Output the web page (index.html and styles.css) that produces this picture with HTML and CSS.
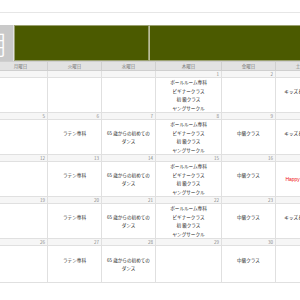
FILE: index.html
```html
<!DOCTYPE html>
<html lang="ja">
<head>
<meta charset="utf-8">
<link rel="stylesheet" href="styles.css">
</head>
<body>
<div class="topbar"></div>
<div class="cal">
  <div class="head">
    <div class="month"><span>11月</span></div>
    <div class="band b1"></div>
    <div class="band b2"></div>
  </div>
  <table class="grid">
    <colgroup><col class="c54"><col class="c54"><col class="c54"><col class="c66"><col class="c54"><col class="c54"></colgroup>
    <tr class="days"><td>月曜日</td><td>火曜日</td><td>水曜日</td><td>木曜日</td><td>金曜日</td><td>土曜日</td></tr>
    <tr class="dates"><td></td><td></td><td></td><td>1</td><td>2</td><td>3</td></tr>
    <tr class="ev"><td></td><td></td><td></td><td>ボールルーム専科<br>ビギナークラス<br>初 級クラス<br>ヤングサークル</td><td></td><td>キッズ＆ジュニア<br>&nbsp;</td></tr>
    <tr class="dates"><td>5</td><td>6</td><td>7</td><td>8</td><td>9</td><td>10</td></tr>
    <tr class="ev"><td></td><td>ラテン専科<br>&nbsp;</td><td>65 歳からの初めての<br>ダンス</td><td>ボールルーム専科<br>ビギナークラス<br>初 級クラス<br>ヤングサークル</td><td>中級クラス<br>&nbsp;</td><td>キッズ＆ジュニア<br>&nbsp;</td></tr>
    <tr class="dates"><td>12</td><td>13</td><td>14</td><td>15</td><td>16</td><td>17</td></tr>
    <tr class="ev"><td></td><td>ラテン専科<br>&nbsp;</td><td>65 歳からの初めての<br>ダンス</td><td>ボールルーム専科<br>ビギナークラス<br>初 級クラス<br>ヤングサークル</td><td>中級クラス<br>&nbsp;</td><td><span class="red">Happy Birthday</span></td></tr>
    <tr class="dates"><td>19</td><td>20</td><td>21</td><td>22</td><td>23</td><td>24</td></tr>
    <tr class="ev"><td></td><td>ラテン専科<br>&nbsp;</td><td>65 歳からの初めての<br>ダンス</td><td>ボールルーム専科<br>ビギナークラス<br>初 級クラス<br>ヤングサークル</td><td>中級クラス<br>&nbsp;</td><td>キッズ＆ジュニア<br>&nbsp;</td></tr>
    <tr class="dates"><td>26</td><td>27</td><td>28</td><td>29</td><td>30</td><td></td></tr>
    <tr class="ev last"><td></td><td>ラテン専科<br>&nbsp;</td><td>65 歳からの初めての<br>ダンス</td><td></td><td>中級クラス<br>&nbsp;</td><td></td></tr>
  </table>
</div>
</body>
</html>
```
FILE: styles.css
```css
html, body {
  margin: 0;
  padding: 0;
  overflow: hidden;
  background: #fff;
  font-family: "Noto Sans CJK JP", "Noto Sans", sans-serif;
}
.topbar {
  height: 12px;
  border-bottom: 1px solid #e6e6e6;
}
.cal {
  margin-top: 12px;
  margin-left: -7px;
  width: 336px;
}
.head {
  display: flex;
  height: 36px;
}
.month {
  width: 21px;
  flex: none;
  background: #c9c9c9;
  overflow: hidden;
  display: flex;
  justify-content: flex-end;
  align-items: center;
  border-right: 1px solid #e2e2e2;
  box-sizing: border-box;
}
.month span {
  flex: none;
  color: #fff;
  font-size: 27px;
  font-weight: 300;
  line-height: 1;
  white-space: nowrap;
  padding-right: 4px;
}
.band {
  background: #4b5a00;
  border: 1px solid #9aa070;
  box-sizing: border-box;
}
.b1 { width: 135px; flex: none; }
.b2 { flex: 1; border-left: 1px solid #b9bd9a; }
.grid {
  border-collapse: collapse;
  table-layout: fixed;
  width: 336px;
}
.c54 { width: 54px; }
.c66 { width: 66px; }
.grid td {
  border: 1px solid #e0e0e0;
  padding: 0;
  text-align: center;
  color: #222;
}
.days td {
  height: 8px;
  background: #e2e2e2;
  border-color: #cfcfcf;
  color: #777;
  font-size: 4.5px;
  line-height: 8px;
}
.dates td {
  height: 6px;
  background: #f6f6f6;
  text-align: right;
  color: #888;
  font-size: 4.5px;
  line-height: 6px;
  padding-right: 2px;
}
.ev td {
  height: 33px;
  font-size: 4.6px;
  line-height: 8.5px;
  vertical-align: middle;
  white-space: nowrap;
}
.ev.last td { height: 36px; }
.red { color: #f01010; font-family: "Liberation Sans", sans-serif; font-size: 5px; }
```
